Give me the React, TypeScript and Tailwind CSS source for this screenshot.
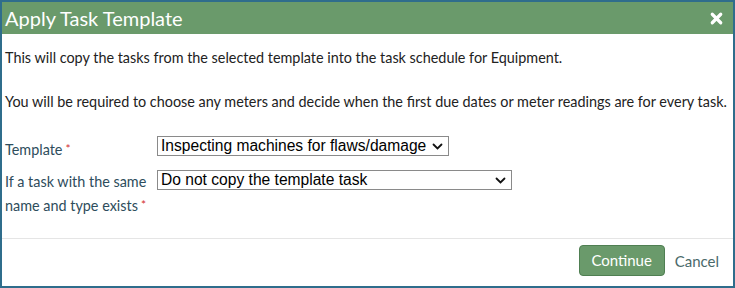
import { X } from "lucide-react";

const Chevron = () => (
  <svg width="11" height="7" viewBox="0 0 11 7" className="shrink-0">
    <path d="M1.5 1.5 L5.5 5.5 L9.5 1.5" fill="none" stroke="#111" strokeWidth="1.8" strokeLinecap="round" />
  </svg>
);

const FakeSelect = ({ value, width }: { value: string; width: string }) => (
  <div
    className={`flex h-[20px] shrink-0 items-center justify-between border border-[#8a8a8a] bg-white pl-[3px] pr-[5px] text-[15.6px] leading-none text-black ${width}`}
    style={{ fontFamily: '"Liberation Sans", Arial, sans-serif' }}
  >
    <span className="whitespace-nowrap">{value}</span>
    <Chevron />
  </div>
);

const Req = () => <span className="relative -top-[2px] ml-[3px] text-[12px] text-[#d32f2f]">*</span>;

export default function App() {
  return (
    <div className="h-[288px] w-[735px] bg-white" style={{ fontFamily: "Lato, sans-serif" }}>
      <div className="flex h-full flex-col border-2 border-[#2f6d8c]">
        <header className="flex h-[32px] items-center justify-between bg-[#6a9a6b] pl-[3px] pr-[8px]">
          <h1 className="text-[20px] leading-none text-white">Apply Task Template</h1>
          <X className="h-[17px] w-[17px] text-white" strokeWidth={4.5} />
        </header>

        <div className="flex-1 px-[3px] pt-[13px] text-[14.4px] text-[#222]">
          <p className="leading-[22px]">This will copy the tasks from the selected template into the task schedule for Equipment.</p>
          <p className="mt-[22px] leading-[22px]">
            You will be required to choose any meters and decide when the first due dates or meter readings are for every task.
          </p>

          <div className="mt-[23px] flex flex-col gap-[14px] text-[#2e4d5c]">
            <div className="flex h-[20px] items-start">
              <label className="mt-[3px] w-[152px] shrink-0 leading-[22px]">
                Template<Req />
              </label>
              <FakeSelect value="Inspecting machines for flaws/damage" width="w-[292px]" />
            </div>
            <div className="flex items-start">
              <label className="w-[152px] shrink-0 leading-[24px]">
                If a task with the same name and type exists<Req />
              </label>
              <FakeSelect value="Do not copy the template task" width="w-[355px]" />
            </div>
          </div>
        </div>

        <footer className="flex h-[48px] items-start justify-end gap-[10px] border-t border-[#e5e5e5] pr-[14px] pt-[6px]">
          <button className="h-[31px] w-[86px] rounded-[4px] border border-[#4f7f52] bg-[#6a9a6b] text-[15px] text-white">
            Continue
          </button>
          <span className="mt-[5px] text-[15px] text-[#4a6a6a]">Cancel</span>
        </footer>
      </div>
    </div>
  );
}
